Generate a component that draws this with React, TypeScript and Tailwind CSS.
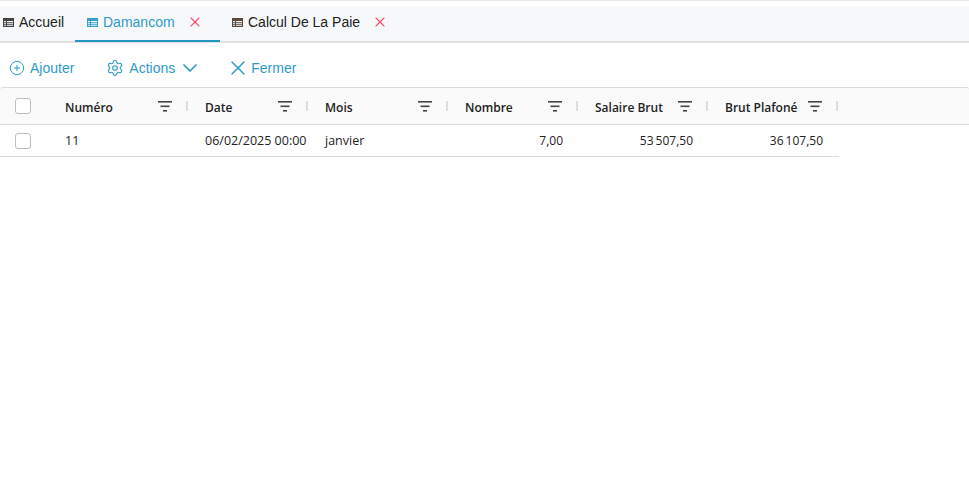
import React from 'react';
import { CirclePlus, Settings, ChevronDown, X } from 'lucide-react';

const TableIcon = ({ className }: { className: string }) => (
  <svg viewBox="0 0 11 9" className={`h-[9px] w-[11px] shrink-0 ${className}`} fill="currentColor">
    <path fillRule="evenodd" d="M0 0h11v9H0zM1 3v1.2h2V3zm3 0v1.2h6V3zM1 5.2v1h2v-1zm3 0v1h6v-1zM1 7.2V8h2v-.8zm3 0V8h6v-.8z" />
  </svg>
);

const FilterIcon = () => (
  <svg viewBox="0 0 14 11" className="h-[11px] w-[14px]" fill="#444">
    <rect x="0" y="0" width="14" height="1.6" />
    <rect x="2.5" y="4.5" width="9" height="1.6" />
    <rect x="5" y="9" width="4" height="1.6" />
  </svg>
);

const Checkbox = () => <div className="h-4 w-4 rounded-[3px] border border-[#bdbdbd] bg-white" />;

const columns = [
  { label: 'Numéro', width: 'w-[140px]', value: '11', right: false },
  { label: 'Date', width: 'w-[120px]', value: '06/02/2025 00:00', right: false },
  { label: 'Mois', width: 'w-[140px]', value: 'janvier', right: false },
  { label: 'Nombre', width: 'w-[130px]', value: '7,00', right: true },
  { label: 'Salaire Brut', width: 'w-[130px]', value: '53\u2006507,50', right: true },
  { label: 'Brut Plafoné', width: 'w-[130px]', value: '36\u2006107,50', right: true },
];

export default function App() {
  return (
    <div className="h-[486px] w-[969px] overflow-hidden bg-white font-['Liberation_Sans',sans-serif]">
      <div className="h-px bg-[#e8e8e8]" />
      <div className="mt-[5px] flex h-[37px] items-stretch border-b-[2px] border-[#e0e0e0] bg-[#f6f8fa] text-sm text-[#222]">
        <div className="flex w-[75px] items-center gap-[5px] pb-[3px] pl-[3px]">
          <TableIcon className="text-[#444]" />
          <span>Accueil</span>
        </div>
        <div className="mb-[-1px] flex w-[145px] items-center border-b-2 border-[#2398c4] pb-[2px] pl-3 text-[#2f9bc7]">
          <TableIcon className="text-[#3b9fcd]" />
          <span className="ml-[5px]">Damancom</span>
          <X className="ml-[12px] h-4 w-4 shrink-0 text-[#f0506e]" strokeWidth={1.6} />
        </div>
        <div className="flex items-center pb-[3px] pl-3">
          <TableIcon className="text-[#5c4a3c]" />
          <span className="ml-[5px]">Calcul De La Paie</span>
          <X className="ml-[12px] h-4 w-4 shrink-0 text-[#f0506e]" strokeWidth={1.6} />
        </div>
      </div>

      <div className="flex h-[44px] items-center pl-[9px] pt-[6px] text-sm text-[#2f9bc7]">
        <CirclePlus className="h-4 w-4" strokeWidth={1.5} />
        <span className="ml-[5px]">Ajouter</span>
        <Settings className="ml-[32px] h-[18px] w-[18px]" strokeWidth={1.5} />
        <span className="ml-[5px]">Actions</span>
        <ChevronDown className="ml-[3px] h-6 w-6" strokeWidth={1.75} />
        <X className="ml-[24px] h-6 w-6" strokeWidth={1.5} />
        <span className="ml-[1px]">Fermer</span>
      </div>

      <div className="font-['Open_Sans',sans-serif] text-xs text-[#222]">
        <div className="flex h-[38px] items-center rounded-t-[3px] border-y border-[#dcdcdc] bg-[#fafafa]">
          <div className="flex w-[50px] shrink-0 justify-center pr-[5px]">
            <Checkbox />
          </div>
          {columns.map((col) => (
            <div key={col.label} className={`flex ${col.width} shrink-0 items-center justify-between pl-[15px] pr-[2px]`}>
              <span className="pt-[3px] font-semibold">{col.label}</span>
              <div className="flex items-center gap-[14px]">
                <FilterIcon />
                <div className="h-[10px] w-[2px] bg-[#dedede]" />
              </div>
            </div>
          ))}
        </div>
        <div className="flex h-8 w-[839px] items-center border-b border-[#dcdcdc]">
          <div className="flex w-[50px] shrink-0 justify-center pr-[5px]">
            <Checkbox />
          </div>
          {columns.map((col) => (
            <div key={col.label} className={`${col.width} shrink-0 whitespace-nowrap pl-[15px] pr-[17px] pt-[1px] ${col.right ? 'text-right text-xs' : 'text-[12.5px]'}`}>
              {col.value}
            </div>
          ))}
        </div>
      </div>
    </div>
  );
}
